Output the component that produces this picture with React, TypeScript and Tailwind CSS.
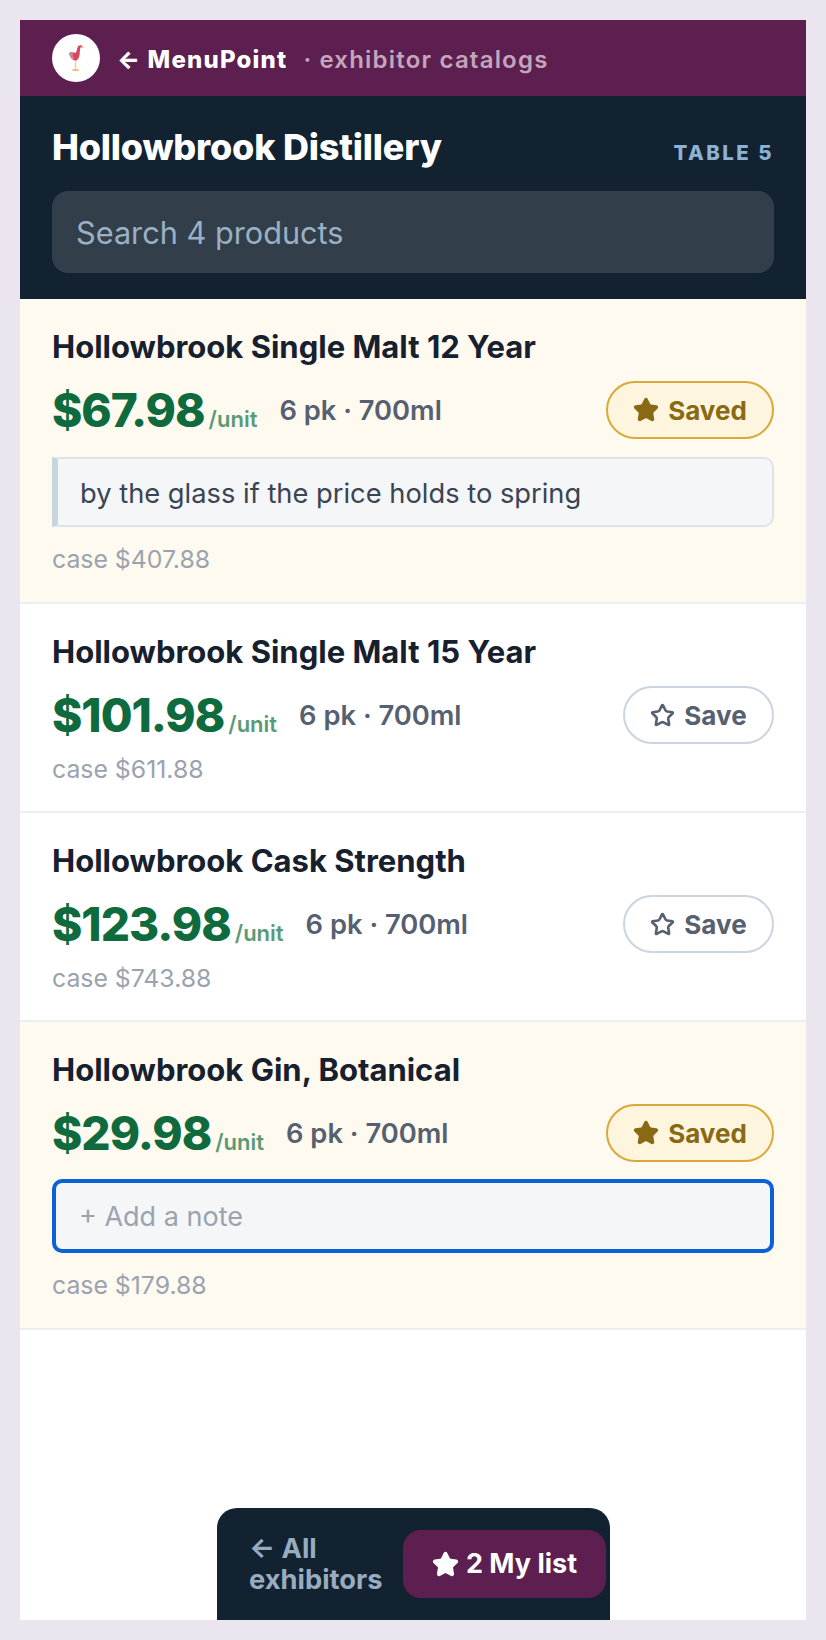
import { Star } from "lucide-react";

const FONT = "font-['Inter','Liberation_Sans',sans-serif]";

interface Product {
  name: string;
  price: string;
  caseText: string;
  saved: boolean;
  note?: string;
  notePlaceholder?: string;
}

const products: Product[] = [
  { name: "Hollowbrook Single Malt 12 Year", price: "$67.98", caseText: "case $407.88", saved: true, note: "by the glass if the price holds to spring" },
  { name: "Hollowbrook Single Malt 15 Year", price: "$101.98", caseText: "case $611.88", saved: false },
  { name: "Hollowbrook Cask Strength", price: "$123.98", caseText: "case $743.88", saved: false },
  { name: "Hollowbrook Gin, Botanical", price: "$29.98", caseText: "case $179.88", saved: true, notePlaceholder: "+ Add a note" },
];

// flamingo-in-a-wine-glass mark
function FlamingoGlass() {
  return (
    <svg viewBox="0 0 48 48" className="w-12 h-12">
      <path d="M23.5 26 V35" stroke="#f6cfa8" strokeWidth="1.6" fill="none" />
      <path d="M20.5 36 H26.5" stroke="#f3b27a" strokeWidth="1.8" fill="none" />
      <path d="M17 19 C19 17.5 22 18.5 23.5 19 C25 17 25 15 25.5 13.5 C26 11 29.5 10.5 30.5 12.5 L28.5 13.5 C27.8 15 28 18 27.5 21 C27 24.5 25.5 26.5 23.5 26.5 C20.5 26.5 18 23.5 17 19 Z" fill="#d8465f" />
      <path d="M17 19 C18.5 18 20 18.2 21 18.6 C20.5 21 21 23.5 22 25.8 C19.5 25 18 22.5 17 19 Z" fill="#c98a98" />
      <path d="M29.5 11.8 L32 13.2 L29.5 14 Z" fill="#f0a468" />
    </svg>
  );
}

function SaveButton({ saved }: { saved: boolean }) {
  if (saved) {
    return (
      <div className="h-[58px] w-[168px] shrink-0 rounded-full border-2 border-[#d9a93a] bg-[#fdf5dd] flex items-center justify-center gap-[9px] text-[#8a6914] text-[26px] font-bold">
        <Star size={26} fill="#8a6914" strokeWidth={2.5} />
        <span>Saved</span>
      </div>
    );
  }
  return (
    <div className="h-[58px] w-[151px] shrink-0 rounded-full border-2 border-[#cbd5df] bg-white flex items-center justify-center gap-[9px] text-[#566070] text-[26px] font-bold">
      <Star size={25} strokeWidth={2.5} />
      <span>Save</span>
    </div>
  );
}

function ProductRow({ p }: { p: Product }) {
  const hasNote = p.note || p.notePlaceholder;
  return (
    <div className={`border-b-2 border-[#eceef1] px-8 pt-[30px] ${hasNote ? "pb-[27px]" : "pb-[26px]"} ${p.saved ? "bg-[#fffaef]" : "bg-white"}`}>
      <div className="text-[31px] leading-[36px] font-bold text-[#16202e]">{p.name}</div>
      <div className="mt-4 flex items-center justify-between">
        <div className="flex items-center">
          <div className="flex items-baseline">
            <span className="text-[46px] leading-[58px] font-extrabold tracking-[-1px] text-[#0f6b3e]">{p.price}</span>
            <span className="ml-1 text-[22px] font-semibold text-[#5b9a76]">/unit</span>
          </div>
          <span className="ml-[22px] mt-[3px] text-[27.3px] font-semibold text-[#566070]">6 pk · 700ml</span>
        </div>
        <SaveButton saved={p.saved} />
      </div>
      {p.note && (
        <div className="mt-[18px] h-[70px] rounded-r-[10px] border-2 border-l-[6px] border-[#dde3ea] border-l-[#c9d5de] bg-[#f4f6f8] pl-[22px] pt-1 flex items-center text-[27.3px] text-[#3b4452]">
          {p.note}
        </div>
      )}
      {p.notePlaceholder && (
        <div className="mt-[17px] h-[74px] rounded-[10px] border-4 border-[#0b62d6] bg-[#f4f6f8] pl-[23px] pt-[2px] flex items-center text-[27px] text-[#9aa3af]">
          {p.notePlaceholder}
        </div>
      )}
      <div className={`${hasNote ? "mt-4" : "mt-[9px]"} text-[24.8px] leading-[32px] text-[#9aa3af]`}>{p.caseText}</div>
    </div>
  );
}

export default function App() {
  return (
    <div className={`h-[1640px] bg-[#ebe5f0] p-5 ${FONT}`}>
      <div className="relative h-[1600px] bg-white overflow-hidden">
        <div className="h-[76px] bg-[#5c1f4f] px-8 flex items-center">
          <div className="w-12 h-12 rounded-full bg-white shrink-0">
            <FlamingoGlass />
          </div>
          <span className="ml-[17px] mt-[3px] text-[24px] font-extrabold tracking-[1.2px] text-white">← MenuPoint</span>
          <span className="ml-[16px] mt-[3px] text-[24px] font-semibold tracking-[1.2px] text-[#c4a5bd]">· exhibitor catalogs</span>
        </div>
        <div className="bg-[#122231] px-8 pt-[29px] pb-[26px]">
          <div className="flex items-baseline justify-between">
            <div className="text-[36px] leading-[45px] font-extrabold tracking-[-0.2px] text-white">Hollowbrook Distillery</div>
            <div className="text-[20.4px] font-extrabold tracking-[2.5px] text-[#8db2d4]">TABLE 5</div>
          </div>
          <div className="mt-[21px] h-[82px] rounded-[16px] bg-[#323f4b] px-6 pt-[2px] flex items-center text-[30.7px] text-[#9ab0c4]">Search 4 products</div>
        </div>
        {products.map((p) => (
          <ProductRow key={p.name} p={p} />
        ))}
        <div className="absolute left-[197px] bottom-0 w-[393px] h-[112px] rounded-t-[20px] bg-[#122231] flex items-start pt-[22px] pl-8 pr-1 justify-between">
          <div className="w-[150px] mt-[3px] text-[27.3px] leading-[31px] font-bold text-[#98acc0]">← All exhibitors</div>
          <div className="h-[68px] w-[203px] shrink-0 rounded-[18px] bg-[#5c1f4f] flex items-center justify-center gap-[7px] text-[27px] font-bold text-white">
            <Star size={27} fill="white" strokeWidth={2.5} />
            <span>2 My list</span>
          </div>
        </div>
      </div>
    </div>
  );
}
